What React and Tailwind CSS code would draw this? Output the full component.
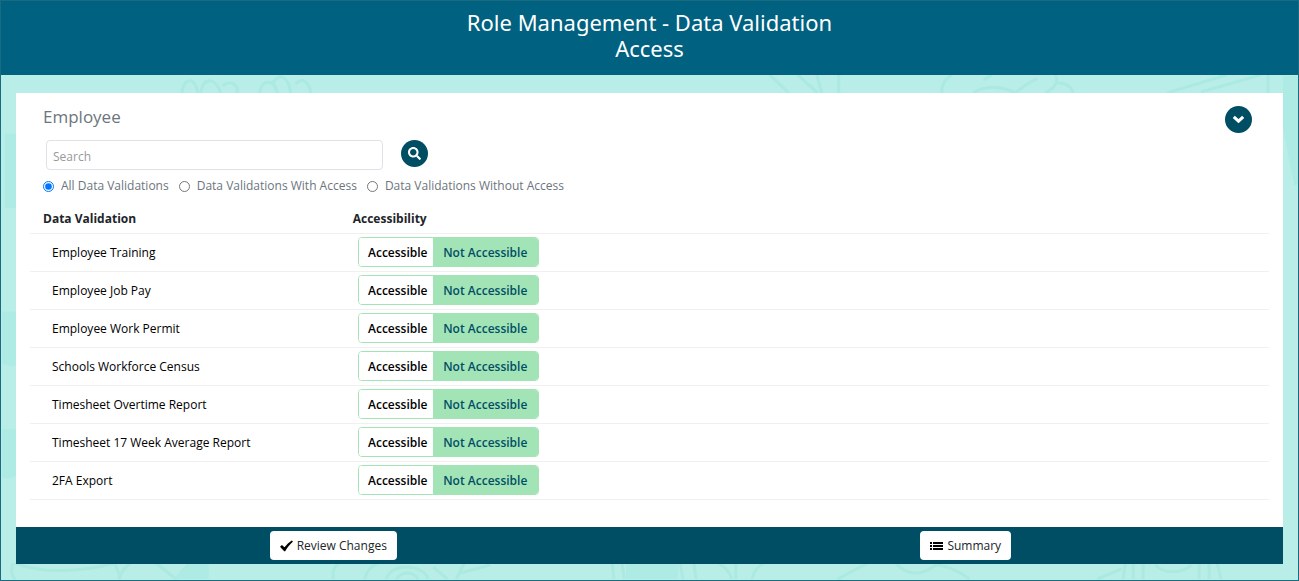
import { useState } from 'react';
import { FaSearch } from 'react-icons/fa';

const validations = [
    'Employee Training',
    'Employee Job Pay',
    'Employee Work Permit',
    'Schools Workforce Census',
    'Timesheet Overtime Report',
    'Timesheet 17 Week Average Report',
    '2FA Export',
];

const filters = [
    { id: 'all', label: 'All Data Validations' },
    { id: 'with', label: 'Data Validations With Access' },
    { id: 'without', label: 'Data Validations Without Access' },
];

// Faint line drawings behind the card
const Doodles = () => (
    <svg className="absolute inset-0 h-full w-full" viewBox="0 0 1299 581" preserveAspectRatio="none" fill="none" stroke="#abe9e1" strokeWidth="3" aria-hidden="true">
        <path d="M181 93c2-16 14-16 16 0M200 93c3-18 16-14 20 0M222 86c6-6 18-2 14 8M259 93c2-14 14-14 18 0M272 84c6-12 16-8 18 9M295 84c8-8 14 0 15 9" />
        <path d="M770 75l19 18M798 75l20 18M817 75l5 18M839 75v18" />
        <path d="M942 93c0-8 4-14 10-18M974 93c12-8 30-6 42 0 8-6 14-12 22-14M984 80l8-5M1056 75c4 8-2 14-10 18M1058 83c8 0 14 4 16 10" />
        <path d="M1168 93l60-18M1202 92l60-17M1269 75v18M1285 125l12 60" />
        <path d="M12 564c-2 6-2 12 2 16M14 564c30 12 70 8 100 0l6 16M130 564c-8 6-10 10-12 16M155 564l20 16 14-16M338 564c-6 6-6 10-5 16M364 580c2-8 8-14 14-16M386 580c4-16 36-16 42 0M396 580c6-8 16-8 22 0" />
        <path d="M433 568l14 12M456 580l8-16M460 574l30-8M612 564l2 16M622 564l2 16M680 564l3 16M694 564l2 16M718 564c8 4 12 10 14 16M736 564v16M764 564c-8 4-10 10-12 16M838 580l30-16" />
        <path d="M896 564c14 16 30 10 40 2 10 0 24 6 34 14M1098 580l24-10M1126 564l-2 16M1134 564v16M1144 564v16M1156 566c10 10 28 8 36 0M1200 564v16M1210 564v16M1218 564l4 16" />
        <g fill="#aeebe4" stroke="none">
            <path d="M4 134h12v74H4zM1 312h15v54c-8 2-12 0-15-2zM1 430h15v46c-6 4-12 4-15 2zM626 564h52v16h-52zM172 580l20-16h16v16zM1284 76h15v110l-8-20-7-44z" />
        </g>
    </svg>
);

const ChevronIcon = () => (
    <svg width="13" height="13" viewBox="0 0 13 13" fill="none" stroke="currentColor" strokeWidth="3" aria-hidden="true">
        <path d="M1.8 3.8l4.7 4.4 4.7-4.4" />
    </svg>
);

const CheckIcon = () => (
    <svg width="13" height="12" viewBox="0 0 13 12" fill="#000" aria-hidden="true">
        <path d="M0 6.8L1.9 5l2.6 2.3C6.6 4.700 9 2.300 11.800 0.500L13 1.500C9.900 4.300 7.300 7.400 5.200 11.200H4.200z" />
    </svg>
);

const ListIcon = () => (
    <svg width="13" height="8" viewBox="0 0 13 8" fill="#000" aria-hidden="true">
        <path d="M0 0h2v2H0zM0 3h2v2H0zM0 6h2v2H0zM3 0h10v2H3zM3 3h10v2H3zM3 6h10v2H3z" />
    </svg>
);

const AccessToggle = ({ name, accessible, onChange }) => (
    <div role="group" aria-label={name} className="flex h-[30px] w-[181px] overflow-hidden rounded border border-[#a3e4b7] font-semibold">
        <button type="button" aria-pressed={accessible} onClick={() => onChange(true)} className={`w-[74px] pt-0.5 pl-1 ${accessible ? 'bg-[#a3e4b7] text-[#004e64]' : 'bg-white text-black'}`}>
            Accessible
        </button>
        <button type="button" aria-pressed={!accessible} onClick={() => onChange(false)} className={`flex-1 pt-0.5 ${accessible ? 'bg-white text-black' : 'bg-[#a3e4b7] text-[#004e64]'}`}>
            Not Accessible
        </button>
    </div>
);

const App = () => {
    const [search, setSearch] = useState('');
    const [filter, setFilter] = useState('all');
    const [access, setAccess] = useState({});
    const [open, setOpen] = useState(true);

    const rows = validations.filter((name) => {
        if (!name.toLowerCase().includes(search.toLowerCase())) return false;
        if (filter === 'with') return !!access[name];
        if (filter === 'without') return !access[name];
        return true;
    });

    return (
        <div className="flex min-h-screen flex-col border border-[#1a6a80] bg-[#b8eee7] font-['Open_Sans',sans-serif] text-[12px] text-[#212529]">
            <header className="bg-[#006180] pt-2 pb-3.5">
                <h1 className="mx-auto w-1/3 text-center font-['Noto_Sans',sans-serif] text-[22px] leading-[26px] text-white">Role Management - Data Validation Access</h1>
            </header>

            <div className="relative flex flex-1 flex-col px-[15px] pt-[18px] pb-4">
                <div className="absolute inset-0 overflow-hidden">
                    <div className="absolute inset-x-0 -top-[75px] bottom-0">
                        <Doodles />
                    </div>
                </div>

                <main className="relative flex flex-1 flex-col bg-white">
                    <section className="flex-1 px-3.5 pt-3">
                        <div className="flex items-start justify-between pr-[17px] pl-[13px]">
                            <h2 className="text-[17px] leading-6 text-[#6c757d]">Employee</h2>
                            <button type="button" aria-label="Toggle section" aria-expanded={open} onClick={() => setOpen(!open)} className="mt-px flex size-[27px] items-center justify-center rounded-full bg-[#004e64] text-white">
                                <ChevronIcon />
                            </button>
                        </div>

                        {open && (
                            <>
                                <div className="mt-[7px] flex items-start gap-[18px] pl-4">
                                    <input type="text" aria-label="Search" placeholder="Search" value={search} onChange={(e) => setSearch(e.target.value)} className="h-[30px] w-[337px] rounded border border-[#dee2e6] px-1.5 pt-0.5 placeholder:text-[#999]" />
                                    <button type="button" aria-label="Search" className="flex size-[27px] items-center justify-center rounded-full bg-[#004e64] text-white">
                                        <FaSearch size={13} />
                                    </button>
                                </div>

                                <div className="mt-1.5 flex gap-2.5 pl-[13px] leading-5 text-[#6c757d]">
                                    {filters.map((f) => (
                                        <label key={f.id} className="flex items-center gap-[7px]">
                                            <input type="radio" name="filter" checked={filter === f.id} onChange={() => setFilter(f.id)} className="size-[11px] accent-[#0075ff]" />
                                            {f.label}
                                        </label>
                                    ))}
                                </div>

                                <table className="mt-[7px] w-full text-left">
                                    <thead>
                                        <tr className="h-[30px] border-b border-[#f0f0f0]">
                                            <th className="w-1/4 pt-0.5 pl-[13px] font-bold">Data Validation</th>
                                            <th className="pt-0.5 pl-[13px] font-bold">Accessibility</th>
                                        </tr>
                                    </thead>
                                    <tbody>
                                        {rows.map((name) => (
                                            <tr key={name} className="h-[38px] border-b border-[#f0f0f0]">
                                                <td className="pt-0.5 pl-[22px] text-black">{name}</td>
                                                <td className="pl-[18px]">
                                                    <AccessToggle name={name} accessible={!!access[name]} onChange={(value) => setAccess({ ...access, [name]: value })} />
                                                </td>
                                            </tr>
                                        ))}
                                    </tbody>
                                </table>
                            </>
                        )}
                    </section>

                    <footer className="grid grid-cols-2 justify-items-center bg-[#004e64] px-px py-1">
                        <button type="button" className="flex h-[29px] items-center gap-1 rounded bg-white px-2.5">
                            <CheckIcon />
                            Review Changes
                        </button>
                        <button type="button" className="flex h-[29px] items-center gap-1 rounded bg-white px-2.5">
                            <ListIcon />
                            Summary
                        </button>
                    </footer>
                </main>
            </div>
        </div>
    );
};

export default App;
